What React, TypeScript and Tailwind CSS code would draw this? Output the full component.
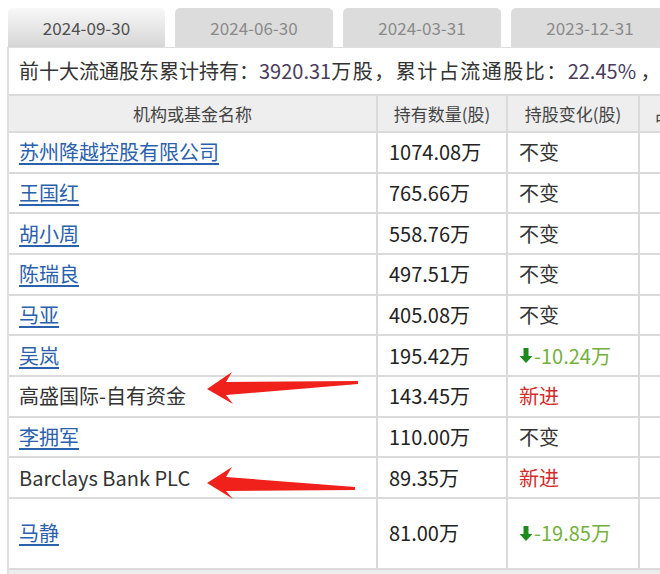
import React from "react"

const rows = [
  { name: "苏州降越控股有限公司", link: true, amount: "1074.08万", change: "same" },
  { name: "王国红", link: true, amount: "765.66万", change: "same" },
  { name: "胡小周", link: true, amount: "558.76万", change: "same" },
  { name: "陈瑞良", link: true, amount: "497.51万", change: "same" },
  { name: "马亚", link: true, amount: "405.08万", change: "same" },
  { name: "吴岚", link: true, amount: "195.42万", change: "-10.24万" },
  { name: "高盛国际-自有资金", link: false, amount: "143.45万", change: "new" },
  { name: "李拥军", link: true, amount: "110.00万", change: "same" },
  { name: "Barclays Bank PLC", link: false, amount: "89.35万", change: "new" },
  { name: "马静", link: true, amount: "81.00万", change: "-19.85万" },
]

const tabs = ["2024-09-30", "2024-06-30", "2024-03-31", "2023-12-31"]

function Change({ value }: { value: string }) {
  if (value === "same") return <span className="text-[#333]">不变</span>
  if (value === "new") return <span className="text-[#d22c2c]">新进</span>
  return (
    <span className="flex items-center text-[#74b13c]">
      <svg width="14" height="17" viewBox="0 0 14 17" className="mr-[1px]">
        <path d="M4.5 1h5v8h4L7 16 0.5 9h4z" fill="#1e8a1e" />
      </svg>
      {value}
    </span>
  )
}

export default function App() {
  return (
    <div className="relative w-[660px] h-[574px] overflow-hidden bg-white font-['Noto_Sans_CJK_SC',sans-serif] text-[#333]">
      <div className="flex pt-2 pl-2 h-[47px]">
        {tabs.map((t, i) => (
          <div
            key={t}
            className={
              i === 0
                ? "shrink-0 w-[157px] h-[39px] mr-[10px] rounded-t-[5px] bg-gradient-to-b from-[#f8f8f8] to-[#d6d6d6] flex items-center justify-center text-[17px] text-[#505050]"
                : "shrink-0 w-[158px] h-[39px] mr-[10px] rounded-t-[5px] bg-[#dcdcdc] flex items-center justify-center text-[17px] text-[#8a8a8a]"
            }
          >
            {t}
          </div>
        ))}
      </div>

      <div className="ml-[7px] w-[800px] border-l-2 border-t border-[#dedede]">
        <div className="h-[46px] flex items-center pl-[10px] text-[20px] whitespace-nowrap">
          前十大流通股东累计持有：<span className="text-[#4a3c5c]">3920.31</span>
          <span className="tracking-[1.5px]">万股，累计占流通股比：</span>
          <span className="text-[#4a3c5c]">22.45%</span>&nbsp;，较上期变化：-30.09万股
        </div>

        <div className="flex h-[39px] bg-[#eeeeee] border-y-2 border-[#dadada] text-[17px] text-[#444]">
          <div className="w-[369px] border-r-2 border-[#dadada] flex items-center justify-center">机构或基金名称</div>
          <div className="w-[130px] border-r-2 border-[#dadada] flex items-center justify-center">持有数量(股)</div>
          <div className="w-[132px] border-r-2 border-[#dadada] flex items-center justify-center">持股变化(股)</div>
          <div className="flex-1 flex items-center pl-[14px] whitespace-nowrap">占流通股比例(%)</div>
        </div>

        {rows.map((r, i) => (
          <div
            key={r.name}
            className={`flex border-b-2 border-[#dadada] text-[20px] ${i === rows.length - 1 ? "h-[71px]" : "h-[40.67px]"}`}
          >
            <div className="w-[369px] border-r-2 border-[#dadada] flex items-center pl-[10px] whitespace-nowrap">
              {r.link ? (
                <a href="#" className="text-[#2a61ad] underline underline-offset-[3px]">{r.name}</a>
              ) : (
                <span className="text-[#333]">{r.name}</span>
              )}
            </div>
            <div className="w-[130px] border-r-2 border-[#dadada] flex items-center pl-[11px] text-[#222]">{r.amount}</div>
            <div className="w-[132px] border-r-2 border-[#dadada] flex items-center pl-[11px]">
              <Change value={r.change} />
            </div>
            <div className="flex-1" />
          </div>
        ))}
        <div className="h-[10px] bg-[#ececec]" />
      </div>

      <svg className="absolute left-0 top-0 pointer-events-none" width="660" height="574">
        <polygon points="207,389 232,372 226,382 358,381 358,384 226,395 233,404" fill="#f0211b" />
        <polygon points="207,483 232,467 226,477 355,487 355,490 226,491 233,499" fill="#f0211b" />
      </svg>
    </div>
  )
}
